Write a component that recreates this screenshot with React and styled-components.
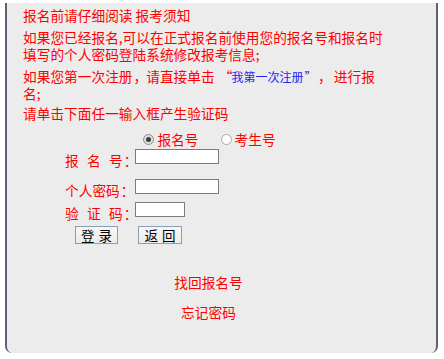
import React from "react";
import styled, { createGlobalStyle } from "styled-components";

const Global = createGlobalStyle`
  html, body { margin: 0; padding: 0; background: #ffffff; }
  body { font-family: "Noto Sans CJK SC", "Noto Sans", sans-serif; }
`;

const Panel = styled.div`
  box-sizing: border-box;
  margin: 3px 0 0 5px;
  width: 433px;
  height: 350px;
  background: #ececec;
  border: 2px solid #5d6372;
  border-top: none;
  border-bottom: none;
  border-radius: 0 0 7px 7px;
  padding: 4px 42px 0 16px;
  color: #ff0000;
  font-size: 13.7px;
`;

const Para = styled.p`
  margin: ${(p) => p.$mt || 0}px 0 0;
  line-height: 17px;
`;

/* full-width punctuation box: glyph pushed to one side of a 1em cell */
const Punct = styled.span`
  display: inline-block;
  width: 13.7px;
  text-align: ${(p) => p.$side || "left"};
  box-sizing: border-box;
  padding: 0 1px;
`;

const Link = styled.a`
  color: #2323f0;
  font-size: 12px;
  text-decoration: none;
`;

const RadioRow = styled.div`
  display: flex;
  justify-content: center;
  align-items: center;
  gap: 22px;
  margin-top: 9px;
  line-height: 17px;
  padding-left: 2px;
`;

const RadioItem = styled.label`
  display: flex;
  align-items: center;
  gap: 3px;
`;

const RadioDot = styled.span`
  box-sizing: border-box;
  width: 11px;
  height: 11px;
  border-radius: 50%;
  border: 1px solid ${(p) => (p.$on ? "#8d8d8d" : "#a8a8a8")};
  background: ${(p) => (p.$on ? "#dcdcdc" : "#ffffff")};
  display: flex;
  align-items: center;
  justify-content: center;
  &::after {
    content: "";
    width: 5px;
    height: 5px;
    border-radius: 50%;
    background: ${(p) => (p.$on ? "#3c3c3c" : "transparent")};
  }
`;

const Form = styled.div`
  display: flex;
  flex-direction: column;
  padding-left: 42px;
  margin-top: 1px;
`;

const Row = styled.div`
  display: flex;
  align-items: flex-start;
  gap: 2px;
  margin-bottom: ${(p) => p.$mb || 0}px;
`;

const Label = styled.span`
  width: 68px;
  margin-top: 3px;
  line-height: 17px;
  white-space: pre;
  word-spacing: 5.3px;
`;

const Input = styled.input`
  box-sizing: border-box;
  width: ${(p) => p.$w}px;
  height: 15px;
  margin: 0;
  padding: 0 2px;
  border: 1px solid #7b7b7b;
  background: #ffffff;
  font-size: 12px;
  outline: none;
`;

const Buttons = styled.div`
  display: flex;
  gap: 20px;
  padding-left: 52px;
  margin-top: 4px;
`;

const Button = styled.button`
  box-sizing: border-box;
  width: ${(p) => p.$w}px;
  height: 18px;
  margin: 0;
  padding: 0;
  border: 1px solid #86a0ba;
  background: linear-gradient(#f7f7f7, #ececec);
  color: #000000;
  font-family: "Noto Sans CJK SC", sans-serif;
  font-size: 13.5px;
  line-height: 16px;
  word-spacing: 1px;
  white-space: pre;
`;

const Links = styled.div`
  display: flex;
  flex-direction: column;
  align-items: center;
  gap: 13px;
  margin-top: 30px;
  line-height: 17px;
`;

const Plain = styled.span`
  color: #ff0000;
`;

export default function App() {
  return (
    <>
      <Global />
      <Panel>
        <Para>报名前请仔细阅读 报考须知</Para>
        <Para $mt={5}>
          如果您已经报名,可以在正式报名前使用您的报名号和报名时填写的个人密码登陆系统修改报考信息;
        </Para>
        <Para $mt={4.5}>
          如果您第一次注册<Punct>，</Punct>请直接单击 <Punct $side="right">“</Punct>
          <Link href="#">
            我第一次注册<Punct>”</Punct>
          </Link>
          <Punct>，</Punct> 进行报
          <br />
          名;
        </Para>
        <Para $mt={3}>请单击下面任一输入框产生验证码</Para>
        <RadioRow>
          <RadioItem>
            <RadioDot $on />
            <Plain>报名号</Plain>
          </RadioItem>
          <RadioItem>
            <RadioDot />
            <Plain>考生号</Plain>
          </RadioItem>
        </RadioRow>
        <Form>
          <Row $mb={10}>
            <Label>
              报 名 号<Punct $side="center">：</Punct>
            </Label>
            <Input $w={84} />
          </Row>
          <Row $mb={3}>
            <Label>
              个人密码<Punct $side="center">：</Punct>
            </Label>
            <Input $w={84} type="password" />
          </Row>
          <Row>
            <Label>
              验 证 码<Punct $side="center">：</Punct>
            </Label>
            <Input $w={50} />
          </Row>
        </Form>
        <Buttons>
          <Button $w={43}>登 录</Button>
          <Button $w={44}>返 回</Button>
        </Buttons>
        <Links>
          <Plain>找回报名号</Plain>
          <Plain>忘记密码</Plain>
        </Links>
      </Panel>
    </>
  );
}
